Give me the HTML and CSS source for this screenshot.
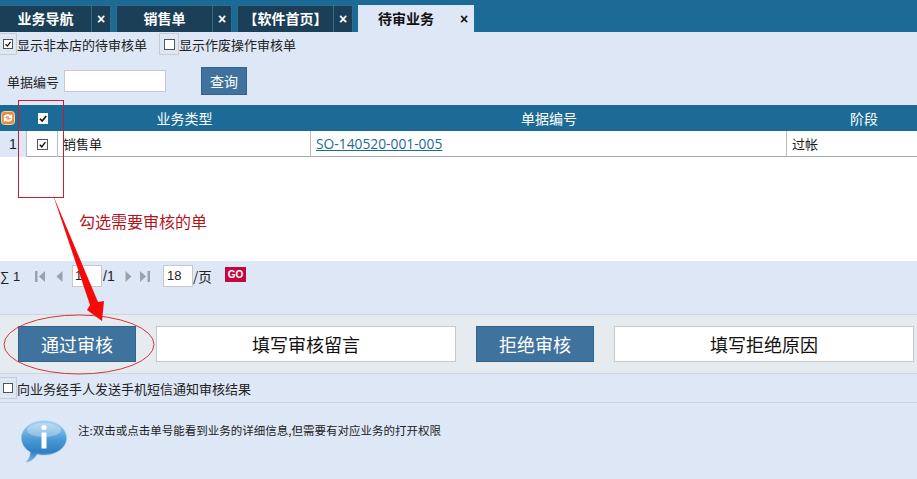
FILE: index.html
```html
<!DOCTYPE html>
<html lang="zh">
<head>
<meta charset="utf-8">
<title>待审业务</title>
<link rel="stylesheet" href="styles.css">
</head>
<body>
<div class="page">
  <nav class="tabs">
    <div class="tab first"><span class="tab-label">业务导航</span><span class="tab-close">×</span></div>
    <div class="tab"><span class="tab-label">销售单</span><span class="tab-close">×</span></div>
    <div class="tab"><span class="tab-label">【软件首页】</span><span class="tab-close">×</span></div>
    <div class="tab active"><span class="tab-label">待审业务</span><span class="tab-close">×</span></div>
  </nav>

  <div class="options">
    <label class="opt"><span class="box-frame"><span class="box checked"><svg viewBox="0 0 10 10" class="tick"><path d="M2 5.2 4.2 7.6 8.2 2.4" /></svg></span></span>显示非本店的待审核单</label>
    <label class="opt second"><span class="box-frame"><span class="box"></span></span>显示作废操作审核单</label>
  </div>

  <div class="search">
    <span class="search-label">单据编号</span>
    <span class="search-input"></span>
    <span class="search-btn">查询</span>
  </div>

  <div class="grid">
    <div class="grid-head">
      <div class="cell-n"><svg class="refresh" viewBox="0 0 14 14"><rect x="0.5" y="0.5" width="13" height="13" rx="3" fill="#ee8a3e" stroke="#f6cfa6"/><path d="M2.500 6.200C3.200 3.300 7.400 2.200 9.700 4.300L11.200 3V7.200H7.200L8.400 6C7 4.800 4.800 5 4.200 6.400ZM11.500 7.800C10.800 10.700 6.600 11.800 4.300 9.700L2.800 11V6.800H6.800L5.600 8C7 9.200 9.200 9 9.800 7.600Z" fill="#fff"/></svg></div>
      <div class="cell-c"><span class="head-box"><svg viewBox="0 0 10 10" class="tick"><path d="M2 5.2 4.2 7.6 8.2 2.4" /></svg></span></div>
      <div class="cell-t">业务类型</div>
      <div class="cell-d">单据编号</div>
      <div class="cell-s">阶段</div>
    </div>
    <div class="grid-row">
      <div class="cell-n">1</div>
      <div class="cell-c"><span class="row-box"><svg viewBox="0 0 10 10" class="tick"><path d="M2 5.2 4.2 7.6 8.2 2.4" /></svg></span></div>
      <div class="cell-t">销售单</div>
      <div class="cell-d"><a class="doc-link" href="#">SO-140520-001-005</a></div>
      <div class="cell-s">过帐</div>
    </div>
    <div class="grid-empty"></div>
  </div>

  <div class="pager">
    <span class="sum">∑ 1</span>
    <svg class="pg pg-first" viewBox="0 0 11 13"><rect x="0" y="1" width="2.5" height="11" fill="#9aa3ad"/><path d="M10 1v11L4 6.500Z" fill="#9aa3ad"/></svg>
    <svg class="pg pg-prev" viewBox="0 0 7 13"><path d="M6.500 1v11L.5 6.500Z" fill="#9aa3ad"/></svg>
    <span class="pg-input">1</span>
    <span class="pg-total">/1</span>
    <svg class="pg pg-next" viewBox="0 0 7 13"><path d="M.5 1v11l6-5.500Z" fill="#9aa3ad"/></svg>
    <svg class="pg pg-last" viewBox="0 0 11 13"><path d="M1 1v11l6-5.500Z" fill="#9aa3ad"/><rect x="8.500" y="1" width="2.500" height="11" fill="#9aa3ad"/></svg>
    <span class="pg-input size">18</span>
    <span class="pg-unit">/页</span>
    <span class="pg-go">GO</span>
  </div>

  <div class="actions">
    <span class="act-btn">通过审核</span>
    <span class="act-field">填写审核留言</span>
    <span class="act-btn">拒绝审核</span>
    <span class="act-field">填写拒绝原因</span>
  </div>

  <div class="notify">
    <label class="opt"><span class="box-frame"><span class="box"></span></span>向业务经手人发送手机短信通知审核结果</label>
  </div>

  <div class="note">
    <svg class="info" viewBox="0 0 46 43">
      <defs>
        <linearGradient id="bubble" x1="0" y1="0" x2="0" y2="1">
          <stop offset="0" stop-color="#a9d4f2"/>
          <stop offset="0.45" stop-color="#4b9ad6"/>
          <stop offset="0.75" stop-color="#2f7fc4"/>
          <stop offset="1" stop-color="#7db8e6"/>
        </linearGradient>
      </defs>
      <path d="M23 1C35 1 45.500 8 45.500 18S35 35 23 35c-3 0-5-.2-7-.8C14 38 10 42 5 42c3-3 4.500-6 4.300-10C4 29 .5 24 .5 18 .5 8 11 1 23 1Z" fill="url(#bubble)" stroke="#8fbfe3" stroke-width="0.600"/>
      <ellipse cx="23" cy="10" rx="17" ry="7" fill="#fff" opacity="0.300"/>
      <circle cx="23" cy="7.500" r="2.600" fill="#fff"/>
      <rect x="20.500" y="12.500" width="5" height="16" rx="0.600" fill="#fff"/>
    </svg>
    <p class="note-text">注:双击或点击单号能看到业务的详细信息,但需要有对应业务的打开权限</p>
  </div>

  <div class="mark-box"></div>
  <div class="mark-text">勾选需要审核的单</div>
  <svg class="mark-arrow" viewBox="0 0 917 479">
    <ellipse cx="79" cy="344.500" rx="75" ry="29.500" fill="none" stroke="#d8333f" stroke-width="1"/>
    <polygon points="53,195 98,302 104,301 102,321 87,310 90,305" fill="#f50a0a"/>
  </svg>
</div>
</body>
</html>
```

FILE: styles.css
```css
* { box-sizing: border-box; }
html, body { margin: 0; padding: 0; }
body {
  font-family: "Noto Sans CJK SC", "Liberation Sans", sans-serif;
  font-size: 13px;
  color: #1a1a1a;
  background: #dee7f6;
}
.page { position: relative; width: 917px; height: 479px; overflow: hidden; background: #dee7f6; }

/* tabs */
.tabs { display: flex; height: 32px; padding-top: 5px; background: #1c6b96; gap: 5px; }
.tab { display: flex; height: 27px; width: 116px; background: #1a3f56; border: 1px solid #2f6c92; border-bottom: 0; color: #fff; font-size: 14px; font-weight: 700; line-height: 25px; }
.tab.first { width: 111px; border-left: 0; }
.tab-label { flex: 1; text-align: center; border-right: 1px solid #2f6c92; }
.tab-close { width: 18px; text-align: center; font: 700 14px/26px "Liberation Sans", sans-serif; }
.tab.active { background: #dee7f6; color: #111; border: 0; line-height: 27px; }
.tab.active .tab-label { border-right: 0; }
.tab.active .tab-close { width: 20px; line-height: 28px; }

/* option rows */
.options { display: flex; height: 24px; padding-top: 1px; align-items: flex-start; }
.opt { display: flex; align-items: center; height: 22px; color: #222; font-size: 13px; }
.second { margin-left: 12px; }
.box-frame { display: flex; align-items: center; justify-content: center; width: 17px; height: 22px; border: 1px solid #c8ccd0; border-left: 0; }
.second .box-frame { width: 20px; border-left: 1px solid #c8ccd0; }
.box { display: block; width: 10px; height: 10px; background: #fff; border: 1px solid #555; }
.second .box { width: 11px; height: 11px; }
.tick { display: block; width: 100%; height: 100%; fill: none; stroke: #111; stroke-width: 1.600; }

/* search */
.search { display: flex; align-items: center; height: 49px; padding: 1px 0 0 7px; }
.search-label { width: 57px; color: #222; }
.search-input { width: 102px; height: 22px; background: #fff; border: 1px solid #c6c9cc; }
.search-btn { display: block; width: 46px; height: 28px; margin-left: 35px; background: #3f739e; border: 1px solid #2d6490; color: #fff; font-size: 14px; text-align: center; line-height: 26px; }

/* grid */
.grid { display: flex; flex-direction: column; height: 156px; background: #fff; }
.grid-head, .grid-row { display: grid; grid-template-columns: 27px 31px 253px 476px 130px; }
.grid-head { height: 26px; background: #1c6b96; color: #fff; font-size: 14px; line-height: 26px; text-align: center; }
.grid-head .cell-s { padding-left: 24px; }
.grid-row { height: 26px; border-bottom: 1px solid #a4aab0; line-height: 26px; }
.grid-row > div { border-right: 1px solid #b8bcc0; }
.grid-row > div:last-child { border-right: 0; padding-left: 5px; }
.grid-row .cell-n { background: #dee7f6; text-align: center; font: 14px/26px "Liberation Sans", sans-serif; }
.grid-row .cell-t, .grid-row .cell-d { padding-left: 5px; }
.cell-c { display: flex; align-items: center; justify-content: center; }
.grid-head .cell-n { display: flex; align-items: center; padding-left: 1px; }
.refresh { width: 14px; height: 14px; }
.head-box { display: block; width: 10px; height: 11px; background: #fff; }
.row-box { display: block; width: 11px; height: 11px; border: 1px solid #555; background: #fff; }
.doc-link { color: #1c6b96; text-decoration: underline; font-family: "Open Sans", "Liberation Sans", sans-serif; font-size: 13.800px; }
.grid-empty { flex: 1; }

/* pager */
.pager { display: flex; align-items: center; height: 53px; padding: 0 0 23px; color: #222; }
.sum { width: 35px; font: 13px "Liberation Sans", sans-serif; }
.pg { display: block; height: 13px; }
.pg-first { width: 11px; }
.pg-prev { width: 7px; margin-left: 10px; }
.pg-input { display: block; width: 30px; height: 22px; margin-left: 9px; padding-left: 2px; background: #fff; border: 1px solid #c6c9cc; line-height: 20px; font-family: "Liberation Sans", sans-serif; font-size: 13px; }
.pg-total { width: 22px; margin-left: 1px; font-family: "Liberation Sans", sans-serif; font-size: 14px; }
.pg-next { width: 7px; }
.pg-last { width: 11px; margin-left: 7px; }
.pg-input.size { margin-left: 13px; padding-left: 3px; }
.pg-unit { width: 32px; font-size: 13.500px; }
.pg-go { display: block; width: 21px; height: 15px; background: #c4083f; color: #fff; font: 700 10px/15px "Liberation Sans", sans-serif; text-align: center; margin-top: -3px; }

/* actions */
.actions { display: flex; align-items: center; gap: 20px; height: 60px; padding-left: 18px; background: #e6ebef; border-top: 1px solid #cdd6df; border-bottom: 1px solid #cdd6df; }
.act-btn { display: block; width: 118px; height: 36px; background: #3f739e; border: 1px solid #2d6490; color: #fff; font-size: 18px; line-height: 34px; text-align: center; }
.act-field { display: block; width: 300px; height: 36px; background: #fff; border: 1px solid #c6c9cc; color: #111; font-size: 18px; line-height: 34px; text-align: center; }

/* notify */
.notify { height: 29px; padding-top: 3px; border-bottom: 1px solid #cdd6df; }

/* note */
.note { display: flex; padding: 17px 0 0 21px; }
.info { display: block; width: 46px; height: 43px; }
.note-text { margin: 1px 0 0 11px; font-size: 11.500px; line-height: 18px; color: #222; }

/* annotations */
.mark-box { position: absolute; left: 18px; top: 100px; width: 46px; height: 98px; border: 1px solid #c2202c; }
.mark-text { position: absolute; left: 79px; top: 210px; color: #b3131b; font-size: 16px; line-height: 22px; }
.mark-arrow { position: absolute; left: 0; top: 0; width: 917px; height: 479px; pointer-events: none; }
```
